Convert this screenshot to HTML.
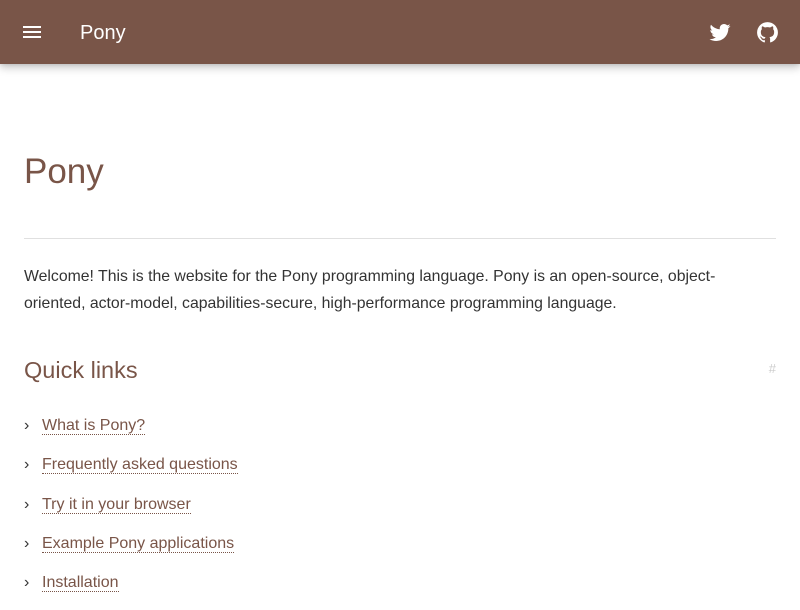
<!DOCTYPE html>
<html><head><meta charset="utf-8"><style>
body{margin:0;font-family:"Liberation Sans",sans-serif;background:#fff;width:800px;height:600px;overflow:hidden;position:relative}
.hdr{position:absolute;left:0;top:0;width:800px;height:64px;background:#795548;box-shadow:0 0 4px rgba(0,0,0,.15),0 4px 8px rgba(0,0,0,.2);color:#fff}
.hdr .t{position:absolute;left:80px;top:21px;font-size:20px;line-height:24px}
.menu{position:absolute;left:23px;top:26px;width:18px}
.menu i{display:block;height:2px;background:#fff;margin-bottom:3px}
h1{position:absolute;left:24px;top:150px;margin:0;font-weight:300;font-size:35px;line-height:44px;color:#795548}
hr{position:absolute;left:24px;top:238px;width:752px;margin:0;border:0;border-top:1px solid #e0e0e0}
p{position:absolute;left:24px;top:263px;width:712px;margin:0;font-size:15.8px;line-height:27px;color:#333}
h2{position:absolute;left:24px;top:354px;margin:0;font-weight:300;font-size:23.5px;line-height:32px;color:#795548}
.hash{position:absolute;right:24px;top:361px;color:#ccc;font-size:13px}
ul{position:absolute;left:24px;top:414px;margin:0;padding:0;list-style:none}
li{font-size:16px;height:39.3px;line-height:24px;color:#795548}
li:before{content:"›";display:inline-block;width:18px;color:#333;font-size:16px}
li span{border-bottom:1px dotted #795548}
</style></head><body>
<div class="hdr">
<div class="menu"><i></i><i></i><i></i></div>
<div class="t">Pony</div>
<svg style="position:absolute;left:708px;top:20px" width="24" height="24" viewBox="0 0 24 24"><path fill="#fff" d="M22.46 6c-.77.35-1.6.58-2.46.69.88-.53 1.56-1.37 1.88-2.38-.83.5-1.75.85-2.72 1.05C18.37 4.5 17.26 4 16 4c-2.35 0-4.27 1.92-4.27 4.29 0 .34.04.67.11.98C8.28 9.09 5.11 7.38 3 4.79c-.37.63-.58 1.37-.58 2.15 0 1.49.75 2.81 1.91 3.56-.71 0-1.37-.2-1.95-.5v.03c0 2.08 1.48 3.82 3.44 4.21a4.22 4.22 0 0 1-1.93.07 4.28 4.28 0 0 0 4 2.98 8.521 8.521 0 0 1-5.33 1.84c-.34 0-.68-.02-1.02-.06C3.44 20.29 5.7 21 8.12 21 16 21 20.33 14.46 20.33 8.79c0-.19 0-.37-.01-.56.84-.6 1.56-1.36 2.14-2.23z"/></svg>
<svg style="position:absolute;left:755px;top:20px" width="25" height="25" viewBox="0 0 24 24"><path fill="#fff" d="M12 2A10 10 0 0 0 2 12c0 4.42 2.87 8.17 6.84 9.5.5.08.66-.23.66-.5v-1.69c-2.77.6-3.36-1.34-3.36-1.34-.46-1.16-1.11-1.47-1.11-1.47-.91-.62.07-.6.07-.6 1 .07 1.53 1.03 1.53 1.03.87 1.52 2.34 1.07 2.91.83.09-.65.35-1.09.63-1.34-2.22-.25-4.55-1.11-4.55-4.92 0-1.11.38-2 1.03-2.71-.1-.25-.45-1.29.1-2.64 0 0 .84-.27 2.75 1.02.79-.22 1.65-.33 2.5-.33.85 0 1.71.11 2.5.33 1.91-1.29 2.75-1.02 2.75-1.02.55 1.35.2 2.39.1 2.64.65.71 1.03 1.6 1.03 2.71 0 3.82-2.34 4.66-4.57 4.91.36.31.69.92.69 1.85V21c0 .27.16.59.67.5C19.14 20.16 22 16.42 22 12A10 10 0 0 0 12 2z"/></svg>
</div>
<h1>Pony</h1>
<hr>
<p>Welcome! This is the website for the Pony programming language. Pony is an open-source, object-oriented, actor-model, capabilities-secure, high-performance programming language.</p>
<h2>Quick links</h2>
<div class="hash">#</div>
<ul>
<li><span>What is Pony?</span></li>
<li><span>Frequently asked questions</span></li>
<li><span>Try it in your browser</span></li>
<li><span>Example Pony applications</span></li>
<li><span>Installation</span></li>
</ul>
</body></html>
